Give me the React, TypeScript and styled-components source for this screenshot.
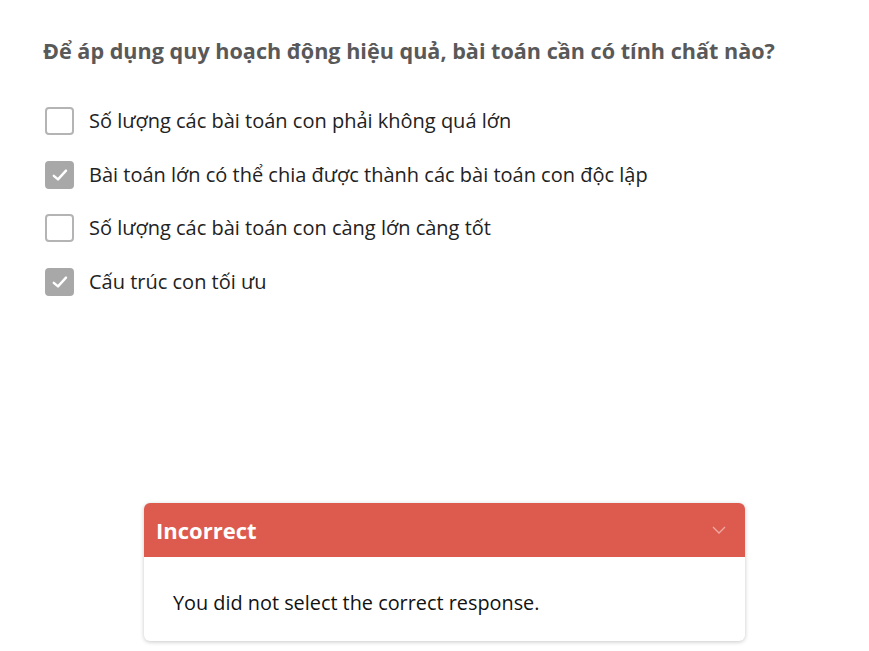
import styled, { createGlobalStyle } from "styled-components";

const GlobalStyle = createGlobalStyle`
  html, body {
    margin: 0;
    padding: 0;
    background: #ffffff;
    font-family: "Open Sans", "Noto Sans", sans-serif;
  }
`;

const options = [
  { text: "Số lượng các bài toán con phải không quá lớn", checked: false },
  { text: "Bài toán lớn có thể chia được thành các bài toán con độc lập", checked: true },
  { text: "Số lượng các bài toán con càng lớn càng tốt", checked: false },
  { text: "Cấu trúc con tối ưu", checked: true },
];

export default function App() {
  return (
    <Page>
      <GlobalStyle />
      <Question>Để áp dụng quy hoạch động hiệu quả, bài toán cần có tính chất nào?</Question>
      <OptionList>
        {options.map((o) => (
          <Option key={o.text}>
            <Box checked={o.checked}>
              {o.checked && (
                <svg width="18" height="18" viewBox="0 0 18 18">
                  <path d="M2.8 9.8 L7 13.4 L15 4.6" fill="none" stroke="#fff" strokeWidth="2.4" strokeLinecap="round" strokeLinejoin="round" />
                </svg>
              )}
            </Box>
            <OptionText>{o.text}</OptionText>
          </Option>
        ))}
      </OptionList>
      <Feedback>
        <FeedbackHeader>
          <FeedbackTitle>Incorrect</FeedbackTitle>
          <svg width="14" height="10" viewBox="0 0 14 10">
            <path d="M1 2 L7 8 L13 2" fill="none" stroke="#f1aaa3" strokeWidth="1.3" />
          </svg>
        </FeedbackHeader>
        <FeedbackBody>You did not select the correct response.</FeedbackBody>
      </Feedback>
    </Page>
  );
}

const Page = styled.div`
  padding: 36px 23px 0 43px;
  height: 651px;
  box-sizing: border-box;
  display: flex;
  flex-direction: column;
`;

const Question = styled.h1`
  margin: 0;
  font-size: 21.6px;
  line-height: 30px;
  font-weight: 700;
  color: #595959;
`;

const OptionList = styled.div`
  display: flex;
  flex-direction: column;
  gap: 25.5px;
  margin-top: 41px;
`;

const Option = styled.label`
  display: flex;
  align-items: center;
  gap: 15px;
  padding-left: 2px;
`;

const Box = styled.span<{ checked: boolean }>`
  width: 29px;
  height: 28px;
  box-sizing: border-box;
  border-radius: 4px;
  border: 2px solid ${(p) => (p.checked ? "#a8a8a8" : "#b4b4b4")};
  background: ${(p) => (p.checked ? "#a8a8a8" : "#ffffff")};
  display: flex;
  align-items: center;
  justify-content: center;
  flex-shrink: 0;
`;

const OptionText = styled.span`
  font-size: 20px;
  line-height: 28px;
  color: #222222;
`;

const Feedback = styled.section`
  width: 601px;
  margin: 207px auto 0;
  border-radius: 6px;
  overflow: hidden;
  background: #ffffff;
  box-shadow: 0 1px 4px rgba(0, 0, 0, 0.22);
`;

const FeedbackHeader = styled.div`
  height: 54px;
  background: #dc5b4e;
  display: flex;
  align-items: center;
  justify-content: space-between;
  padding: 0 19px 0 12px;
`;

const FeedbackTitle = styled.span`
  color: #ffffff;
  font-weight: 700;
  font-size: 22px;
`;

const FeedbackBody = styled.div`
  height: 84px;
  box-sizing: border-box;
  padding: 32px 29px 0;
  font-size: 19.85px;
  line-height: 28px;
  color: #111111;
`;
